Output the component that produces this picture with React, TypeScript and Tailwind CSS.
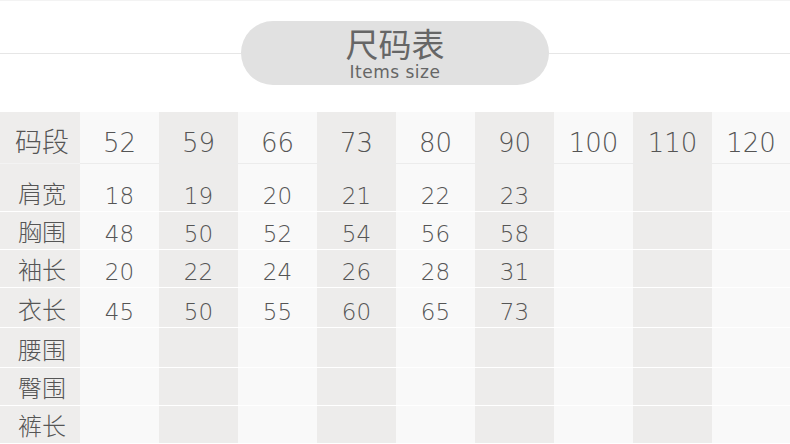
import React from "react";

const sizes = ["52", "59", "66", "73", "80", "90", "100", "110", "120"];
const rows: { label: string; vals: string[]; h: string }[] = [
  { label: "肩宽", vals: ["18", "19", "20", "21", "22", "23"], h: "h-[48px]" },
  { label: "胸围", vals: ["48", "50", "52", "54", "56", "58"], h: "h-[38px]" },
  { label: "袖长", vals: ["20", "22", "24", "26", "28", "31"], h: "h-[38px]" },
  { label: "衣长", vals: ["45", "50", "55", "60", "65", "73"], h: "h-[40px]" },
  { label: "腰围", vals: [], h: "h-[40px]" },
  { label: "臀围", vals: [], h: "h-[38px]" },
  { label: "裤长", vals: [], h: "h-[38px]" },
];

const font = "font-['DejaVu_Sans','Noto_Sans_CJK_SC',sans-serif]";

export default function App() {
  return (
    <div className={`w-[790px] h-[444px] bg-white overflow-hidden text-[#555] ${font}`}>
      <div className="h-px bg-[#f3f3f3]" />
      <div className="flex items-center pt-[20px] pb-[27px]">
        <div className="flex-1 h-px bg-[#e6e6e6]" />
        <div className="w-[308px] h-[64px] rounded-full bg-[#e1e1e1] flex flex-col items-center pt-[5px]">
          <div className="text-[33px] leading-[34px] text-[#666] font-['Noto_Sans_CJK_SC',sans-serif]">尺码表</div>
          <div className="mt-[4px] text-[17px] leading-[17px] tracking-[0.5px] text-[#666] font-['DejaVu_Sans',sans-serif]">Items size</div>
        </div>
        <div className="flex-1 h-px bg-[#e6e6e6]" />
      </div>
      <div className="grid grid-cols-[80px_repeat(8,79px)_78px]">
        <div className="h-[52px] bg-[#eeedec] border-b border-[#f3f3f3] flex items-end justify-center pb-[9px]">
          <span className="text-[27px] leading-[27px] pl-[4px] font-light font-['Noto_Sans_CJK_SC',sans-serif]">码段</span>
        </div>
        {sizes.map((s, i) => (
          <div
            key={s}
            className={`h-[52px] border-b border-[#ececec] flex items-end justify-center pb-[7px] ${i % 2 === 0 ? "bg-[#f9f9f9]" : "bg-[#edeceb]"}`}
          >
            <span className="text-[26px] leading-[26px] font-extralight">{s}</span>
          </div>
        ))}
        {rows.map((r) => (
          <React.Fragment key={r.label}>
            <div className={`${r.h} bg-[#eeedec] border-b border-white flex items-end justify-center pb-[6px]`}>
              <span className="text-[24px] leading-[24px] pl-[4px] font-light font-['Noto_Sans_CJK_SC',sans-serif]">{r.label}</span>
            </div>
            {sizes.map((s, i) => (
              <div
                key={s}
                className={`${r.h} border-b border-white flex items-end justify-center pb-[3px] ${i % 2 === 0 ? "bg-[#f9f9f9]" : "bg-[#edeceb]"}`}
              >
                <span className="text-[23px] leading-[23px] font-extralight">{r.vals[i] ?? ""}</span>
              </div>
            ))}
          </React.Fragment>
        ))}
      </div>
    </div>
  );
}
